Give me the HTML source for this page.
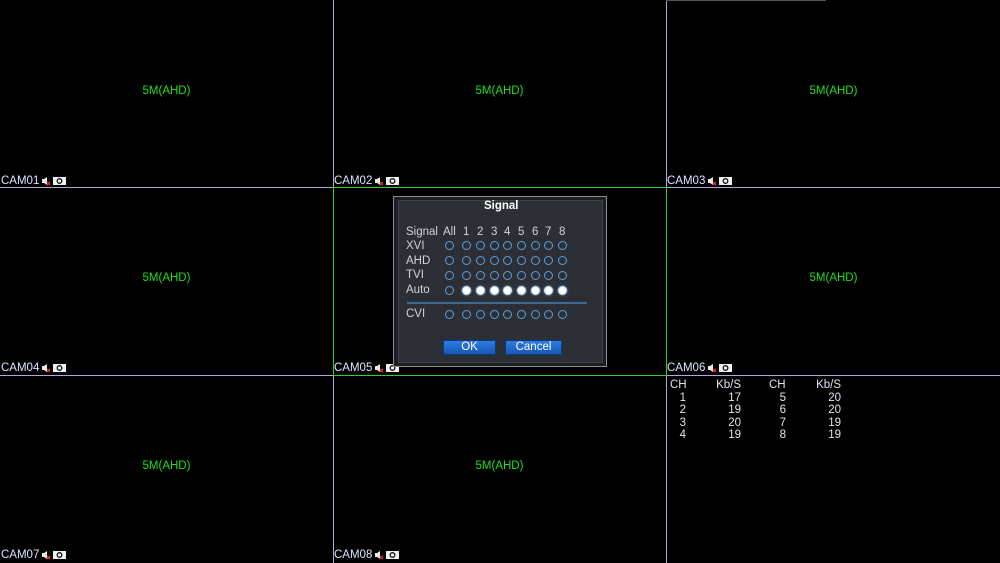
<!DOCTYPE html><html><head><style>
body{margin:0;width:1000px;height:563px;background:#000;position:relative;overflow:hidden;font-family:"Liberation Sans",sans-serif}
.a{position:absolute}
.vl{position:absolute;width:1px;background:#b8a4dc}
.hl{position:absolute;height:1px;background:#b8a4dc}
.g{position:absolute;background:#2ed02e;z-index:10}
.res{position:absolute;color:#1ee01e;font-size:11.5px;width:333px;text-align:center}
.cam{position:absolute;color:#d8e4ff;font-size:11.5px;height:13px;line-height:13px}
.ic{display:inline-block;vertical-align:middle;margin-left:2px}
.t{position:absolute;color:#d0d4e0;font-size:11.5px}
.c{position:absolute;width:7px;height:7px;border:1.2px solid #5aa0d8;border-radius:50%}
.f{background:#fff;border-color:#bfe0ff;box-shadow:0 0 2px #9cf}
.tb{position:absolute;color:#e0e4f0;font-size:11.5px;line-height:12.5px}
.btn{position:absolute;background:linear-gradient(#2f7ce0,#1558b8);border:1px solid #0c3a80;color:#fff;font-size:11.5px;text-align:center;line-height:13px}
</style></head><body>
<div class="vl" style="left:333px;top:0;height:563px"></div>
<div class="vl" style="left:666px;top:0;height:563px"></div>
<div class="hl" style="left:0;top:187px;width:1000px"></div>
<div class="hl" style="left:0;top:375px;width:1000px"></div>
<div class="hl" style="left:666px;top:0;width:160px;background:#555"></div>

<div class="res" style="left:0;top:85px">5M(AHD)</div>
<div class="res" style="left:333px;top:85px">5M(AHD)</div>
<div class="res" style="left:667px;top:85px">5M(AHD)</div>
<div class="res" style="left:0;top:272px">5M(AHD)</div>
<div class="res" style="left:667px;top:272px">5M(AHD)</div>
<div class="res" style="left:0;top:460px">5M(AHD)</div>
<div class="res" style="left:333px;top:460px">5M(AHD)</div>

<script>
const pos=[[1,175,'01'],[334,175,'02'],[667,175,'03'],[1,362,'04'],[334,362,'05'],[667,362,'06'],[1,549,'07'],[334,549,'08']];
let h='';
for(const [x,y,n] of pos){h+=`<div class="cam" style="left:${x}px;top:${y}px">CAM${n}<svg class="ic" width="10" height="10" viewBox="0 0 10 10"><path d="M1 3h2l3-2v8L3 7H1z" fill="#e8e8e8"/><path d="M6 6l3 3M9 6l-3 3" stroke="#e03030" stroke-width="1.3"/></svg><svg class="ic" width="13" height="8" viewBox="0 0 13 8"><rect width="13" height="8" fill="#f0f0f0"/><circle cx="6.5" cy="4" r="2.3" fill="none" stroke="#111" stroke-width="1.3"/></svg></div>`;}
document.write(h);
</script>

<div class="a" style="left:393px;top:196px;width:212px;height:169px;background:#1c1e22;border:1px solid #8a8c90"></div>
<div class="a" style="left:398px;top:200px;width:203px;height:161px;background:#2c2f36;border:1px solid #3e4148"></div>
<div class="t" style="left:484px;top:200px;color:#fff;font-weight:bold;font-size:11.5px">Signal</div>
<div class="t" style="left:406px;top:226px">Signal</div>
<div class="t" style="left:443px;top:226px">All</div>
<div class="t" style="left:406px;top:240px">XVI</div>
<div class="t" style="left:406px;top:255px">AHD</div>
<div class="t" style="left:406px;top:269px">TVI</div>
<div class="t" style="left:406px;top:284px">Auto</div>
<div class="t" style="left:406px;top:308px">CVI</div>
<div class="a" style="left:407px;top:302px;width:180px;height:2px;background:#3a6a98"></div>
<script>
const cx=[466,480,494,507,521,535,548,562];let s='';
cx.forEach((x,i)=>s+=`<div class="t" style="left:${x-3}px;top:226px">${i+1}</div>`);
[[245,0],[260,0],[275,0],[290,1],[314,0]].forEach(([y,f])=>{
s+=`<div class="c" style="left:${449-4.5}px;top:${y-4.5}px"></div>`;
cx.forEach(x=>s+=`<div class="c${f?' f':''}" style="left:${x-4.5}px;top:${y-4.5}px"></div>`);});
document.write(s);
</script>
<div class="btn" style="left:443px;top:340px;width:51px;height:13px">OK</div>
<div class="btn" style="left:505px;top:340px;width:55px;height:13px">Cancel</div>

<div class="tb" style="left:670px;top:379px">CH<br><span style="display:inline-block;width:16px;text-align:right">1<br>2<br>3<br>4</span></div>
<div class="tb" style="left:700px;top:379px;width:41px;text-align:right">Kb/S<br>17<br>19<br>20<br>19</div>
<div class="tb" style="left:769px;top:379px">CH<br><span style="display:inline-block;width:17px;text-align:right">5<br>6<br>7<br>8</span></div>
<div class="tb" style="left:800px;top:379px;width:41px;text-align:right">Kb/S<br>20<br>20<br>19<br>19</div>

<div class="g" style="left:333px;top:187px;width:334px;height:1px"></div>
<div class="g" style="left:333px;top:375px;width:334px;height:1px"></div>
<div class="g" style="left:333px;top:187px;width:1px;height:189px"></div>
<div class="g" style="left:666px;top:187px;width:1px;height:189px"></div>
</body></html>
